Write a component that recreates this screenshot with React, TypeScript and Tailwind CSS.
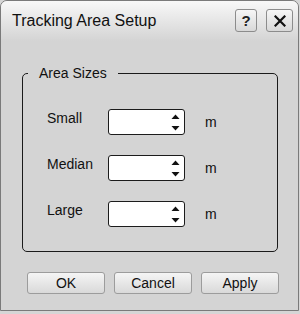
import React from "react";

const font = { fontFamily: '"Liberation Sans", Arial, sans-serif' };

function Spin() {
  return (
    <div className="w-[77px] h-[26px] bg-white border border-[#1c1c1c] rounded-[3px] flex items-center justify-end pr-[4px]">
      <svg width="9" height="17" viewBox="0 0 9 17">
        <polygon points="0.5,5 4.5,0.5 8.5,5" fill="#111" />
        <polygon points="0.5,12 8.5,12 4.5,16.5" fill="#111" />
      </svg>
    </div>
  );
}

function Row({ label }: { label: string }) {
  return (
    <div className="flex items-center h-[26px]">
      <span className="w-[61px] text-[14px] leading-[16px] text-[#111] mb-[9px]">{label}</span>
      <Spin />
      <span className="ml-[20px] text-[14px] leading-[16px] text-[#111]">m</span>
    </div>
  );
}

function Btn({ children }: { children: React.ReactNode }) {
  return (
    <div className="w-[78px] h-[22px] border border-[#9c9c9c] rounded-[3px] bg-gradient-to-b from-[#f5f5f5] to-[#d9d9d9] flex items-center justify-center text-[14px] leading-[16px] text-[#111]">
      {children}
    </div>
  );
}

export default function App() {
  return (
    <div className="w-[300px] h-[314px] bg-[#d6d6d6]" style={font}>
      <div className="w-[299px] h-[311px] border border-[#7a7a7a] rounded-t-[7px] bg-[#d4d4d4] flex flex-col overflow-hidden">
        <div className="h-[40px] bg-gradient-to-b from-[#f8f8f8] to-[#d4d4d4] flex items-start justify-between pl-[11px] pr-[5px]">
          <span className="mt-[11px] text-[16px] leading-[18px] text-[#111]">Tracking Area Setup</span>
          <div className="flex gap-[9px] mt-[8px]">
            <div className="w-[22px] h-[23px] border border-[#8c8c8c] rounded-[3px] bg-gradient-to-b from-[#f6f6f6] to-[#d8d8d8] flex items-center justify-center text-[15px] font-bold leading-[16px] text-[#222]">
              ?
            </div>
            <div className="w-[27px] h-[23px] border border-[#8c8c8c] rounded-[3px] bg-gradient-to-b from-[#f6f6f6] to-[#d8d8d8] flex items-center justify-center">
              <svg width="12" height="12" viewBox="0 0 12 12">
                <path d="M1.5 1.5 L10.5 10.5 M10.5 1.5 L1.5 10.5" stroke="#111" strokeWidth="2.2" strokeLinecap="square" />
              </svg>
            </div>
          </div>
        </div>
        <fieldset className="ml-[21px] mt-[24px] w-[256px] border border-[#1a1a1a] rounded-[5px] p-0">
          <legend className="ml-[5px] px-[11px] text-[14px] leading-[16px] text-[#111]">Area Sizes</legend>
          <div className="pl-[24px] pt-[28px] pb-[24px] flex flex-col gap-[20px]">
            <Row label="Small" />
            <Row label="Median" />
            <Row label="Large" />
          </div>
        </fieldset>
        <div className="flex gap-[9px] ml-[26px] mt-[20px]">
          <Btn>OK</Btn>
          <Btn>Cancel</Btn>
          <Btn>Apply</Btn>
        </div>
      </div>
    </div>
  );
}
